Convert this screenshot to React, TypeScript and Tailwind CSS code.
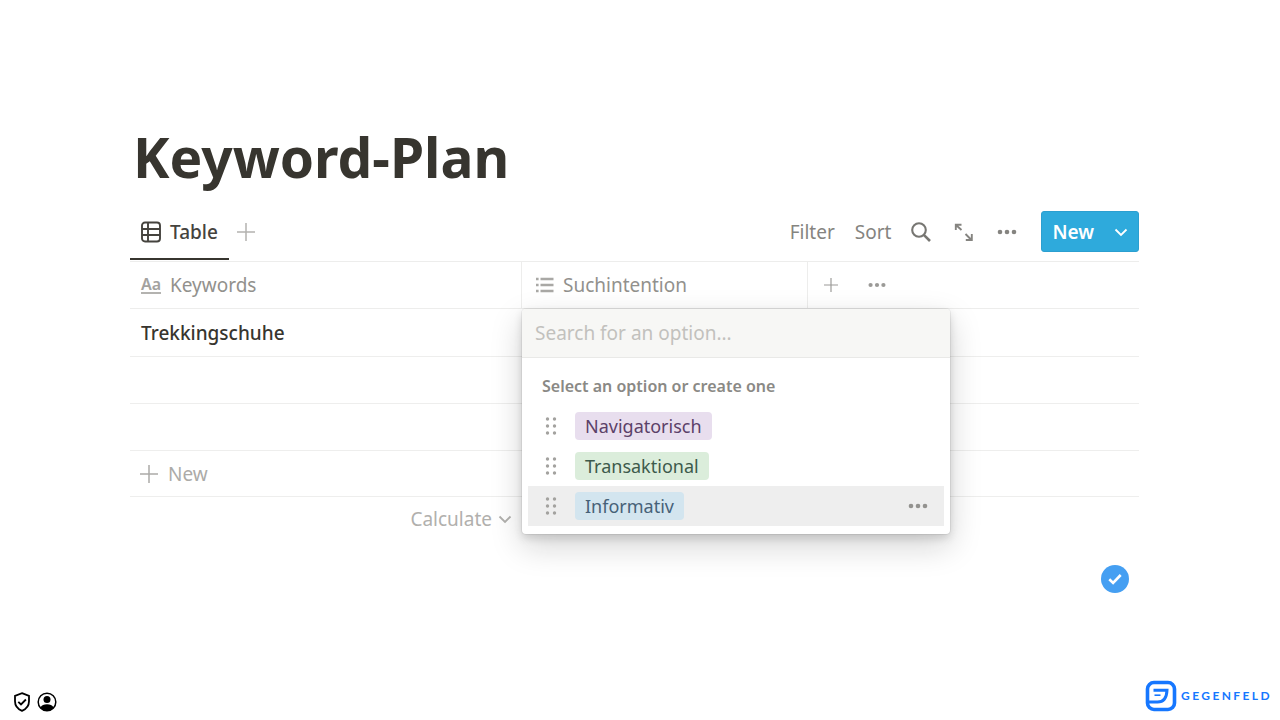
import React, { useState } from "react";
import clsx from "clsx";

interface Option {
  id: string;
  label: string;
  color: "purple" | "green" | "blue";
}

const OPTIONS: Option[] = [
  { id: "nav", label: "Navigatorisch", color: "purple" },
  { id: "trans", label: "Transaktional", color: "green" },
  { id: "info", label: "Informativ", color: "blue" },
];

const TAG_COLORS = {
  purple: "bg-[#e8deee] text-[#5b4168]",
  green: "bg-[#dbeddb] text-[#3d5a4b]",
  blue: "bg-[#d3e5ef] text-[#466178]",
};

const EMPTY_ROWS = ["row-2", "row-3"];

function PlusIcon({ className = "" }: { className?: string }) {
  return (
    <svg viewBox="0 0 18 18" className={className} fill="none" stroke="currentColor" strokeWidth="1.5">
      <path d="M9 0v18M0 9h18" />
    </svg>
  );
}

function DotsIcon({ className = "" }: { className?: string }) {
  return (
    <svg viewBox="0 0 24 24" className={className} fill="currentColor">
      <circle cx="5" cy="12" r="2.3" />
      <circle cx="12" cy="12" r="2.3" />
      <circle cx="19" cy="12" r="2.3" />
    </svg>
  );
}

function ChevronIcon({ className = "" }: { className?: string }) {
  return (
    <svg viewBox="0 0 14 14" className={className} fill="none" stroke="currentColor" strokeWidth="1.8">
      <path d="M1.5 4.5 7 10l5.5-5.5" />
    </svg>
  );
}

function TableIcon() {
  return (
    <svg viewBox="0 0 20 22" className="h-[22px] w-5" fill="none" stroke="currentColor" strokeWidth="1.9">
      <rect x="1" y="1.5" width="18" height="19" rx="3" />
      <path d="M1 8h18M1 14h18M7 1.5v19" />
    </svg>
  );
}

function SearchIcon() {
  return (
    <svg viewBox="0 0 20 20" className="size-5" fill="none" stroke="currentColor" strokeWidth="2.1">
      <circle cx="8" cy="8" r="6.8" />
      <path d="m12.8 12.8 6.2 6.2" strokeWidth="2.6" />
    </svg>
  );
}

function ExpandIcon() {
  return (
    <svg viewBox="0 0 24 24" className="size-6" fill="none" stroke="currentColor" strokeWidth="1.9">
      <path d="m5 5 5.5 5M14.5 14l5.5 5.5M4.8 10V4.7h5.700M20.800 14v6h-6" />
    </svg>
  );
}

function ListIcon() {
  return (
    <svg viewBox="0 0 18 16" className="h-4 w-[18px]" stroke="currentColor" strokeWidth="2.6">
      <path d="M0 2h2.6M0 8h2.6M0 14h2.6M4.5 2h13M4.5 8h13M4.5 14h13" />
    </svg>
  );
}

function GripIcon() {
  return (
    <svg viewBox="0 0 12 18" className="h-[18px] w-3" fill="currentColor">
      {[2, 9, 16].map((y) => (
        <g key={y}>
          <circle cx="2.5" cy={y} r="1.7" />
          <circle cx="9.5" cy={y} r="1.7" />
        </g>
      ))}
    </svg>
  );
}

function Toolbar() {
  return (
    <div className="flex items-start justify-between border-b border-[#ededec]">
      <div className="flex items-start" role="tablist">
        <button
          type="button"
          role="tab"
          aria-selected="true"
          className="flex h-[49px] items-center gap-[9px] border-b-2 border-[#37352f] px-[11px] pb-1.5 font-medium text-[#45433e]"
        >
          <TableIcon />
          Table
        </button>
        <button type="button" aria-label="Add view" className="flex h-[42px] items-center px-2 text-[#b4b3b0]">
          <PlusIcon className="size-[18px]" />
        </button>
      </div>
      <div className="mb-[9px] flex h-[41px] items-center gap-5 text-[#858480]">
        <button type="button">Filter</button>
        <button type="button">Sort</button>
        <button type="button" aria-label="Search" className="text-[#777672]">
          <SearchIcon />
        </button>
        <button type="button" aria-label="Expand">
          <ExpandIcon />
        </button>
        <button type="button" aria-label="More">
          <DotsIcon className="size-6" />
        </button>
        <div className="ml-0.5 flex h-full rounded-[3px] border border-[#2b9fd0] bg-[#2eaadc] font-semibold text-white">
          <button type="button" className="px-2.5">
            New
          </button>
          <button type="button" aria-label="New options" className="px-2.5">
            <ChevronIcon className="size-3.5" />
          </button>
        </div>
      </div>
    </div>
  );
}

function OptionMenu() {
  const [query, setQuery] = useState("");
  const [active, setActive] = useState("info");
  const visible = OPTIONS.filter((o) => o.label.toLowerCase().includes(query.toLowerCase()));

  return (
    <div className="absolute top-0 left-0 z-10 w-[428px] overflow-hidden rounded-[4px] bg-white pb-2 shadow-[0_0_0_1px_rgba(15,15,15,0.06),0_4px_8px_rgba(15,15,15,0.14),0_12px_32px_rgba(15,15,15,0.18)]">
      <input
        type="text"
        aria-label="Search for an option"
        placeholder="Search for an option..."
        value={query}
        onChange={(e) => setQuery(e.target.value)}
        className="block h-[49px] w-full border-b border-[#e9e9e7] bg-[#f7f7f5] px-[13px] text-[#37352f] outline-none placeholder:text-[#c2c1bd]"
      />
      <p className="px-5 pt-4 pb-2 text-base leading-6 font-semibold text-[#8a8985]">
        Select an option or create one
      </p>
      <ul className="px-1.5">
        {visible.map((o) => (
          <li
            key={o.id}
            onMouseEnter={() => setActive(o.id)}
            className={clsx("flex h-10 items-center pr-3.5 pl-[17px]", active === o.id && "bg-[#eeeeee]")}
          >
            <span className="text-[#a3a29f]">
              <GripIcon />
            </span>
            <button
              type="button"
              className={clsx("ml-[18px] rounded-[4px] px-2.5 text-lg leading-7", TAG_COLORS[o.color])}
            >
              {o.label}
            </button>
            {active === o.id && (
              <button type="button" aria-label="Edit option" className="ml-auto text-[#93928f]">
                <DotsIcon className="size-6" />
              </button>
            )}
          </li>
        ))}
      </ul>
    </div>
  );
}

function KeywordTable() {
  return (
    <table className="w-full table-fixed border-separate border-spacing-0 text-left [&_tbody_td]:border-b [&_tbody_td]:border-[#eeeeed]">
      <colgroup>
        <col className="w-[392px]" />
        <col className="w-[286px]" />
        <col />
      </colgroup>
      <thead className="text-[#92918d] [&_th]:h-[47px] [&_th]:border-b [&_th]:border-[#ededec] [&_th]:p-0 [&_th]:font-normal">
        <tr>
          <th scope="col" className="border-r">
            <span className="flex items-center gap-[9px] pl-[11px]">
              <span className="w-5 border-b-2 border-[#b4b3b0] text-base leading-4 font-semibold text-[#a3a29f]">Aa</span>
              Keywords
            </span>
          </th>
          <th scope="col" className="border-r">
            <span className="flex items-center gap-[9px] pl-3.5">
              <span className="text-[#a9a8a5]">
                <ListIcon />
              </span>
              Suchintention
            </span>
          </th>
          <td className="border-b border-[#ededec]">
            <span className="flex items-center gap-7 pl-4 text-[#9b9a97]">
              <button type="button" aria-label="Add column">
                <PlusIcon className="size-3.5" />
              </button>
              <button type="button" aria-label="Column options">
                <DotsIcon className="size-[22px]" />
              </button>
            </span>
          </td>
        </tr>
      </thead>
      <tbody>
        <tr>
          <td className="h-12 pl-[11px] font-medium text-[#37352f]">Trekkingschuhe</td>
          <td className="relative p-0">
            <OptionMenu />
          </td>
          <td />
        </tr>
        {EMPTY_ROWS.map((id) => (
          <tr key={id}>
            <td className="h-[47px]" />
            <td />
            <td />
          </tr>
        ))}
        <tr>
          <td colSpan={3} className="h-[46px] p-0 text-[#acaba8]">
            <button type="button" className="flex items-center gap-2.5 pl-2.5">
              <PlusIcon className="size-[18px]" />
              New
            </button>
          </td>
        </tr>
      </tbody>
      <tfoot>
        <tr>
          <td className="h-[44px] p-0 text-[#b1b0ad]">
            <button type="button" className="ml-auto flex items-center gap-1.5 pr-2.5">
              Calculate
              <ChevronIcon className="size-3.5" />
            </button>
          </td>
          <td colSpan={2} />
        </tr>
      </tfoot>
    </table>
  );
}

function Footer() {
  return (
    <footer className="mt-auto flex items-end justify-between pr-2 pb-2 pl-[13px]">
      <div className="flex items-center gap-1.5 text-black">
        <svg viewBox="0 0 18 20" className="h-5 w-[18px]" fill="none" stroke="currentColor" strokeWidth="1.8">
          <path d="M9 1.200 16 3.800v5.400c0 4.300-2.700 7.800-7 9.600-4.300-1.800-7-5.300-7-9.600V3.800z" />
          <path d="m5.300 9.800 2.700 2.700 4.900-5" />
        </svg>
        <svg viewBox="0 0 20 20" className="size-5" fill="currentColor">
          <circle cx="10" cy="10" r="8.800" fill="none" stroke="currentColor" strokeWidth="1.5" />
          <circle cx="10" cy="7.500" r="3.500" />
          <path d="M3.500 15.500c1-2.400 3.500-3.300 6.500-3.300s5.500.9 6.500 3.300C15 17.700 12.700 19 10 19s-5-1.300-6.500-3.500z" />
        </svg>
      </div>
      <a href="#gegenfeld" className="flex items-center gap-1 text-[#1677ff]">
        <svg viewBox="0 0 32 32" className="size-8" fill="none" stroke="currentColor">
          <rect x="2.500" y="2.500" width="27" height="27" rx="6.500" strokeWidth="3.600" />
          <path d="M8.500 10.200H22c-.3 7-3.300 11.800-9.500 11.800H3" strokeWidth="3" />
          <path d="M9.500 15.200h6" strokeWidth="1.600" />
        </svg>
        <span className="font-['Lato','Open_Sans',sans-serif] text-xs leading-4 font-bold tracking-[0.2em]">
          GEGENFELD
        </span>
      </a>
    </footer>
  );
}

export default function App() {
  return (
    <div className="flex min-h-screen flex-col bg-white font-['Noto_Sans','Open_Sans',sans-serif] text-[19px] leading-7">
      <main className="pt-[121px] pr-[141px] pl-[130px]">
        <h1 className="mb-[18px] pl-[3px] text-[55px] leading-[72px] font-bold text-[#37352f]">Keyword-Plan</h1>
        <Toolbar />
        <KeywordTable />
        <div className="mt-6 flex justify-end pr-2.5">
          <svg viewBox="0 0 28 28" className="size-7" role="img" aria-label="Saved">
            <circle cx="14" cy="14" r="14" fill="#459ff2" />
            <path d="m8.300 14.300 3.800 3.700 7.600-8" fill="none" stroke="#fff" strokeWidth="2.6" />
          </svg>
        </div>
      </main>
      <Footer />
    </div>
  );
}
